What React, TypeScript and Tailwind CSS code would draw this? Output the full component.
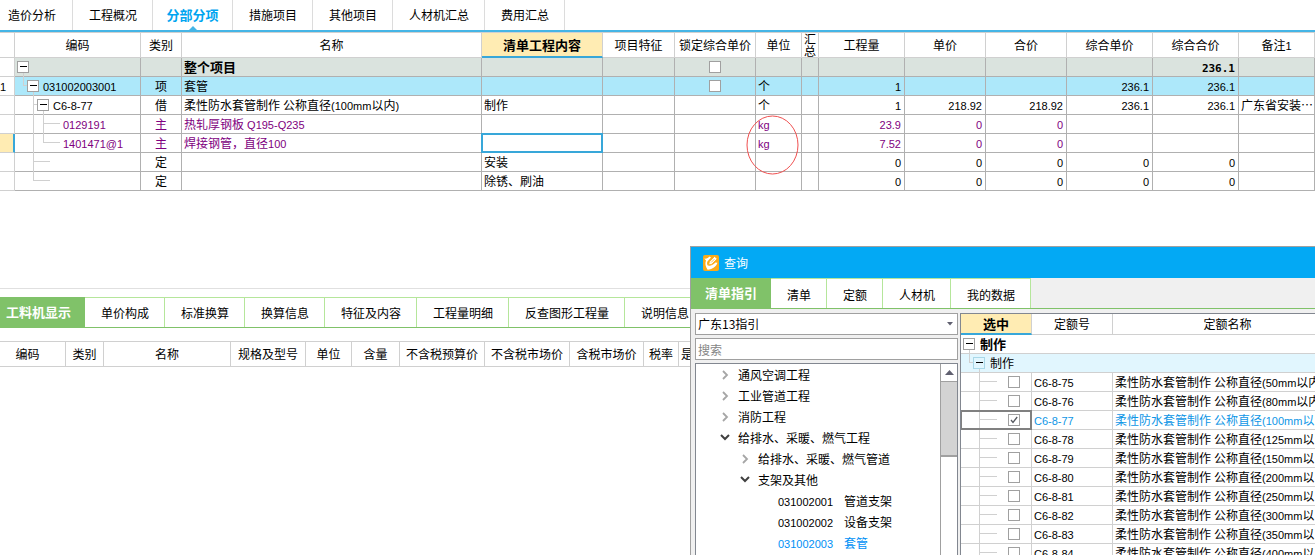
import React from "react";
import clsx from "clsx";

/* Latin runs are set slightly smaller than the Chinese text around them. */
function Mixed({ children, bold }: { children: string; bold?: boolean }) {
  const parts = children.split(/([\x20-\x7e]+)/).filter(Boolean);
  return (
    <>
      {parts.map((p, i) =>
        /^[\x20-\x7e]/.test(p) ? (
          <span
            key={i}
            className={clsx(
              "text-[11px] leading-none whitespace-pre",
              bold ? "font-['DejaVu_Sans_Mono',monospace]" : "font-['Liberation_Sans',sans-serif]",
            )}
          >
            {p}
          </span>
        ) : (
          p
        ),
      )}
    </>
  );
}

function Toggle({ stub = true, tint }: { stub?: boolean; tint?: boolean }) {
  return (
    <button type="button" aria-label="折叠" className="block h-[19px] w-3 shrink-0">
      <svg width="12" height="19" viewBox="0 0 12 19" shapeRendering="crispEdges">
        <rect x="0.5" y="3.5" width="11" height="11" fill={tint ? "#e1f6fe" : "#fff"} stroke={tint ? "#a9d8e8" : "#a0a0a0"} />
        <path d="M3 8.5h7" stroke="#000" />
        {stub && <path d="M6.5 15v4" stroke="#d0d0d0" />}
      </svg>
    </button>
  );
}

function Guides({ width, d }: { width: number; d: string }) {
  return (
    <svg width={width} height="19" className="block shrink-0" shapeRendering="crispEdges">
      <path d={d} fill="none" stroke="#d0d0d0" />
    </svg>
  );
}

function Tick({ checked, label }: { checked?: boolean; label: string }) {
  return (
    <span className="grid size-3 place-items-center">
      <input
        type="checkbox"
        aria-label={label}
        defaultChecked={checked}
        className="col-start-1 row-start-1 size-3 appearance-none border border-[#a0a0a0] bg-white"
      />
      {checked && (
        <svg viewBox="0 0 8 8" className="pointer-events-none col-start-1 row-start-1 size-2">
          <path d="M1 4l2 2.4L7.2 1" fill="none" stroke="#55585f" strokeWidth="1.3" />
        </svg>
      )}
    </span>
  );
}

const topTabs = ["造价分析", "工程概况", "分部分项", "措施项目", "其他项目", "人材机汇总", "费用汇总"];

const mainHeads = [
  "", "编码", "类别", "名称", "清单工程内容", "项目特征", "锁定综合单价", "单位",
  "汇总", "工程量", "单价", "合价", "综合单价", "综合合价", "备注1",
];

type Row = {
  no?: string;
  toggle?: boolean;
  indent: number;
  guides: string;
  code: string;
  kind: string;
  name: string;
  work?: string;
  lock?: boolean;
  unit?: string;
  nums: string[];
  note?: string;
  look?: "total" | "group" | "material";
  selected?: boolean;
};

const rows: Row[] = [
  { toggle: true, indent: 2, guides: "", code: "", kind: "", name: "整个项目", lock: true, nums: ["", "", "", "", "236.1"], look: "total" },
  { no: "1", toggle: true, indent: 12, guides: "M8.5 0v8.5H12", code: "031002003001", kind: "项", name: "套管", lock: true, unit: "个", nums: ["1", "", "", "236.1", "236.1"], look: "group" },
  { toggle: true, indent: 22, guides: "M18.5 0v19M18.5 8.5H22", code: "C6-8-77", kind: "借", name: "柔性防水套管制作 公称直径(100mm以内)", work: "制作", unit: "个", nums: ["1", "218.92", "218.92", "236.1", "236.1"], note: "广东省安装…" },
  { indent: 45, guides: "M18.5 0v19M28.5 0v19M28.5 8.5H45", code: "0129191", kind: "主", name: "热轧厚钢板 Q195-Q235", unit: "kg", nums: ["23.9", "0", "0", "", ""], look: "material" },
  { indent: 45, guides: "M18.5 0v19M28.5 0v8.5H45", code: "1401471@1", kind: "主", name: "焊接钢管，直径100", unit: "kg", nums: ["7.52", "0", "0", "", ""], look: "material", selected: true },
  { indent: 35, guides: "M18.5 0v19M18.5 8.5H35", code: "", kind: "定", name: "", work: "安装", nums: ["0", "0", "0", "0", "0"] },
  { indent: 35, guides: "M18.5 0v8.5H35", code: "", kind: "定", name: "", work: "除锈、刷油", nums: ["0", "0", "0", "0", "0"] },
];

const cell = "h-[19px] border-r border-b border-[#b0b0b0] p-0 leading-[18px]";

function MainTable() {
  return (
    <table className="w-full table-fixed border-separate border-spacing-0 whitespace-nowrap">
      <colgroup>
        <col className="w-[15px]" />
        <col className="w-[126px]" />
        <col className="w-[41px]" />
        <col className="w-[300px]" />
        <col className="w-[121px]" />
        <col className="w-[72px]" />
        <col className="w-[81px]" />
        <col className="w-[46px]" />
        <col className="w-[17px]" />
        <col className="w-[86px]" />
        <col className="w-[81px]" />
        <col className="w-[81px]" />
        <col className="w-[86px]" />
        <col className="w-[86px]" />
        <col />
      </colgroup>
      <thead>
        <tr>
          {mainHeads.map((h, i) => (
            <th
              key={i}
              className={clsx(
                "h-[26px] border-t border-r border-b border-[#d0d0d0] p-0",
                h === "清单工程内容"
                  ? "border-b-2 border-b-[#38a7d9] bg-[#ffecb3] text-[13px] font-bold"
                  : "font-normal",
                h === "汇总" && "px-px leading-3 whitespace-normal",
              )}
            >
              {h === "汇总" ? (
                <div className="mx-auto w-3">{h}</div>
              ) : (
                <Mixed>{h}</Mixed>
              )}
            </th>
          ))}
        </tr>
      </thead>
      <tbody>
        {rows.map((r, i) => (
          <tr
            key={i}
            className={clsx(
              r.look === "total" && "bg-[#dae3de]",
              r.look === "group" && "bg-[#ade8fa]",
              r.look === "material" && "text-[#800080]",
            )}
          >
            <td
              className={clsx(
                "h-[19px] border-b border-[#d0d0d0] p-0 leading-[18px]",
                r.selected ? "border-r-2 border-r-[#38a7d9] bg-[#ffecb3]" : "border-r bg-white",
              )}
            >
              {r.no && <Mixed>{r.no}</Mixed>}
            </td>
            <td className={cell}>
              <div className="-mb-px flex h-[19px]">
                <Guides width={r.indent} d={r.guides} />
                {r.toggle && <Toggle />}
                <span className={r.toggle ? "pl-1" : "pl-[3px]"}>
                  <Mixed>{r.code}</Mixed>
                </span>
              </div>
            </td>
            <td className={clsx(cell, "text-center")}>{r.kind}</td>
            <td className={clsx(cell, "pl-0.5", r.look === "total" && "text-[13px] font-bold")}>
              <Mixed>{r.name}</Mixed>
            </td>
            <td className={clsx(cell, "relative pl-0.5")}>
              {r.work}
              {r.selected && <div className="absolute -inset-px border-2 border-[#38a7d9]" />}
            </td>
            <td className={cell} />
            <td className={clsx(cell, "text-center")}>
              {r.lock && (
                <div className="flex h-[18px] items-center justify-center">
                  <Tick label="锁定综合单价" />
                </div>
              )}
            </td>
            <td className={clsx(cell, "pl-0.5")}>{r.unit && <Mixed>{r.unit}</Mixed>}</td>
            <td className={cell} />
            {r.nums.map((n, j) => (
              <td key={j} className={clsx(cell, "pr-[3px] text-right", r.look === "total" && "font-bold")}>
                <Mixed bold={r.look === "total"}>{n}</Mixed>
              </td>
            ))}
            <td className={clsx(cell, "pl-0.5")}>{r.note}</td>
          </tr>
        ))}
      </tbody>
    </table>
  );
}

const greenTab = "border-r border-[#b5e69b] bg-white pt-0.5 pr-[15px] pl-4";
const greenTabOn = "h-[30px] bg-[#80c269] text-[13px] font-bold text-white";

const lowerTabs = ["单价构成", "标准换算", "换算信息", "特征及内容", "工程量明细", "反查图形工程量", "说明信息"];

function LowerPane() {
  const th = "h-[26px] border-y border-r border-[#d0d0d0] p-0 font-normal";
  return (
    <section className="flex-[267_1_0%] overflow-hidden border-t border-[#e0e0e0]">
      <div className="mt-2 flex border-t border-b border-t-[#b5e69b] border-b-[#80c269] whitespace-nowrap">
        <button type="button" className={clsx(greenTabOn, "-mt-px w-[85px] pr-2")}>
          工料机显示
        </button>
        {lowerTabs.map((t) => (
          <button key={t} type="button" className={clsx(greenTab, "h-[29px]")}>
            {t}
          </button>
        ))}
      </div>
      <table className="mt-[13px] w-full table-fixed border-separate border-spacing-0 whitespace-nowrap">
        <colgroup>
          <col className="w-[66px]" />
          <col className="w-[38px]" />
          <col className="w-[127px]" />
          <col className="w-[75px]" />
          <col className="w-[46px]" />
          <col className="w-[48px]" />
          <col className="w-[85px]" />
          <col className="w-[85px]" />
          <col className="w-[74px]" />
          <col className="w-[35px]" />
          <col />
        </colgroup>
        <thead>
          <tr>
            <th className={clsx(th, "pr-2.5")}>编码</th>
            {["类别", "名称", "规格及型号", "单位", "含量", "不含税预算价", "不含税市场价", "含税市场价", "税率"].map((h) => (
              <th key={h} className={th}>{h}</th>
            ))}
            <th className={clsx(th, "pl-0.5 text-left")}>是</th>
          </tr>
        </thead>
      </table>
    </section>
  );
}

type Node = { level: 0 | 1 | 2; open?: boolean; code?: string; label: string; active?: boolean };

const nodes: Node[] = [
  { level: 0, label: "通风空调工程" },
  { level: 0, label: "工业管道工程" },
  { level: 0, label: "消防工程" },
  { level: 0, open: true, label: "给排水、采暖、燃气工程" },
  { level: 1, label: "给排水、采暖、燃气管道" },
  { level: 1, open: true, label: "支架及其他" },
  { level: 2, code: "031002001", label: "管道支架" },
  { level: 2, code: "031002002", label: "设备支架" },
  { level: 2, code: "031002003", label: "套管", active: true },
];

function Chevron({ open }: { open?: boolean }) {
  return (
    <svg viewBox="0 0 10 10" className="size-2.5">
      {open ? (
        <path d="M1 2l4 4 4-4" fill="none" stroke="#404040" strokeWidth="2" />
      ) : (
        <path d="M3 1l4 4-4 4" fill="none" stroke="#a6a6a6" strokeWidth="1.8" />
      )}
    </svg>
  );
}

function GuideTree() {
  return (
    <div className="flex min-h-0 flex-1 overflow-hidden border border-b-0 border-[#828790] bg-white">
      <ul className="flex-1">
        {nodes.map((n) => (
          <li
            key={n.label}
            className={clsx(
              "flex h-[21px] items-center",
              n.level === 0 && "pl-6",
              n.level === 1 && "pl-11",
              n.level === 2 && "pl-[82px]",
              n.active && "text-[#0090f5]",
            )}
          >
            {n.code ? (
              <>
                <span className="w-[66px]"><Mixed>{n.code}</Mixed></span>
                <span>{n.label}</span>
              </>
            ) : (
              <button type="button" className="flex items-center gap-2">
                <Chevron open={n.open} />
                {n.label}
              </button>
            )}
          </li>
        ))}
      </ul>
      <div className="flex w-[17px] flex-col border-l border-[#a0a0a0]">
        <button type="button" aria-label="向上滚动" className="grid h-[18px] place-items-center border-b border-[#a0a0a0]">
          <svg width="9" height="5" viewBox="0 0 9 5"><path d="M0 5L4.5 0 9 5z" fill="#606070" /></svg>
        </button>
        <div className="h-[75px] shrink-0 border-b-2 border-[#a0a0a0] bg-[#d3d3d3]" />
      </div>
    </div>
  );
}

const quotas = [
  ["C6-8-75", "50"], ["C6-8-76", "80"], ["C6-8-77", "100"], ["C6-8-78", "125"], ["C6-8-79", "150"],
  ["C6-8-80", "200"], ["C6-8-81", "250"], ["C6-8-82", "300"], ["C6-8-83", "350"], ["C6-8-84", "400"],
];

function QuotaTable() {
  const th = "h-[21px] border-r border-b border-[#d0d0d0] p-0";
  const td = "h-[19px] border-r border-b border-[#d0d0d0] p-0 leading-[18px]";
  return (
    <div className="min-w-0 flex-1 overflow-hidden border-t border-l border-[#828790] bg-white">
      <table className="w-full min-w-[382px] table-fixed border-separate border-spacing-0 whitespace-nowrap">
        <colgroup>
          <col className="w-[71px]" />
          <col className="w-[81px]" />
          <col />
        </colgroup>
        <thead>
          <tr>
            <th className={clsx(th, "border-b-2 border-b-[#38a7d9] bg-[#ffecb3] text-[13px] font-bold")}>选中</th>
            <th className={clsx(th, "font-normal")}>定额号</th>
            <th className={clsx(th, "font-normal")}>定额名称</th>
          </tr>
        </thead>
        <tbody>
          <tr>
            <td colSpan={3} className={td}>
              <div className="-mb-px flex h-[19px]">
                <Guides width={2} d="" />
                <Toggle />
                <span className="pl-[5px] text-[13px] font-bold">制作</span>
              </div>
            </td>
          </tr>
          <tr className="bg-[#e1f6fe]">
            <td colSpan={3} className={td}>
              <div className="-mb-px flex h-[19px]">
                <Guides width={12} d="M8.5 0v8.5H12" />
                <Toggle tint />
                <span className="pl-[5px]">制作</span>
              </div>
            </td>
          </tr>
          {quotas.map(([code, size]) => {
            const on = code === "C6-8-77";
            return (
              <tr key={code} className={clsx(on && "text-[#0e96e6]")}>
                <td className={clsx(td, "relative")}>
                  <div className="-mb-px flex h-[19px]">
                    <Guides width={47} d="M18.5 0v19M18.5 8.5H36" />
                    <span className="flex h-[18px] items-center">
                      <Tick checked={on} label={code} />
                    </span>
                  </div>
                  {on && <div className="pointer-events-none absolute -inset-px border-2 border-[#808080]" />}
                </td>
                <td className={clsx(td, "pl-0.5")}><Mixed>{code}</Mixed></td>
                <td className={clsx(td, "pl-0.5")}>
                  <Mixed>{`柔性防水套管制作 公称直径(${size}mm以内)`}</Mixed>
                </td>
              </tr>
            );
          })}
        </tbody>
      </table>
    </div>
  );
}

function QueryWindow() {
  return (
    <div
      role="dialog"
      aria-labelledby="query-title"
      className="absolute top-[246px] right-0 bottom-0 left-[690px] flex flex-col overflow-hidden border-t border-l border-[#a0a0a0] bg-[#f0f0f0]"
    >
      <div className="flex h-[31px] shrink-0 items-center gap-[5px] bg-[#03a9f4] pl-3 text-white">
        <svg viewBox="0 0 16 16" className="size-4">
          <rect width="16" height="16" rx="2" fill="#fbab18" />
          <path d="M1.200 3.600C3.800 3.800 5.400 3 6.600 1.600L8 2.600 4.600 6.200C3.800 7.600 4 9.400 4.800 10.600 7.600 11.200 10.400 10 12.400 7.600L14.400 7.800C13.200 11.600 9.600 14.400 4.600 14.800 2.400 11.600 1.800 8.400 3 5.600z" fill="#fff" />
          <path d="M5.600 9.800L6.400 6.800 11.600 1.400 14.200 3.800 8.800 9.200z" fill="#fff" stroke="#fbab18" strokeWidth=".8" />
          <path d="M8.200 7.400L11.400 4.200" stroke="#fbab18" strokeWidth=".8" />
        </svg>
        <h2 id="query-title">查询</h2>
      </div>
      <div className="flex h-[31px] shrink-0 border-b border-[#80c269] whitespace-nowrap">
        <button type="button" className={clsx(greenTabOn, "w-20")}>清单指引</button>
        {["清单", "定额", "人材机", "我的数据"].map((t) => (
          <button key={t} type="button" className={clsx(greenTab, "h-[30px] border-t")}>
            {t}
          </button>
        ))}
      </div>
      <div className="flex min-h-0 flex-1 gap-[2px] pt-1 pl-1">
        <div className="flex w-[263px] shrink-0 flex-col">
          <div className="relative mb-[3px]">
            <select
              aria-label="指引"
              className="block h-[22px] w-full appearance-none border border-[#a0a0a0] bg-white px-0.5"
            >
              <option>广东13指引</option>
            </select>
            <svg viewBox="0 0 6 4" className="pointer-events-none absolute top-[9px] right-[5px] h-1 w-1.5">
              <path d="M0 0h6L3 3.500z" fill="#606070" />
            </svg>
          </div>
          <input
            aria-label="搜索"
            placeholder="搜索"
            className="mb-[3px] block h-[22px] w-full border border-[#a0a0a0] bg-white px-0.5 placeholder:text-[#858585]"
          />
          <GuideTree />
        </div>
        <QuotaTable />
      </div>
    </div>
  );
}

export default function App() {
  return (
    <main className="relative flex h-screen flex-col overflow-hidden bg-white font-['Noto_Sans_CJK_SC',sans-serif] text-[12px] leading-[18px] text-black">
      <div className="flex min-h-0 flex-[289_1_0%] flex-col">
        <nav className="flex shrink-0 border-b-2 border-[#45b5e6] whitespace-nowrap">
          {topTabs.map((t, i) => (
            <button
              key={t}
              type="button"
              className={clsx(
                "relative h-[30px] border-r border-[#dcdcdc]",
                i === 0 ? "pr-4 pl-2" : i === 2 ? "w-20 text-[13px] font-bold text-[#00a5f0]" : "pr-[15px] pl-4",
              )}
            >
              {t}
              {i === 2 && (
                <svg viewBox="0 0 8 4" className="absolute bottom-0 left-9 h-1 w-2">
                  <path d="M0 4l4-4 4 4z" fill="#45b5e6" />
                </svg>
              )}
            </button>
          ))}
        </nav>
        <MainTable />
      </div>
      <LowerPane />
      <svg viewBox="0 0 53 60" className="pointer-events-none absolute top-[115px] left-[746px] h-[60px] w-[53px]">
        <ellipse cx="26.5" cy="30" rx="25.5" ry="29" fill="none" stroke="#f05050" />
      </svg>
      <QueryWindow />
    </main>
  );
}
